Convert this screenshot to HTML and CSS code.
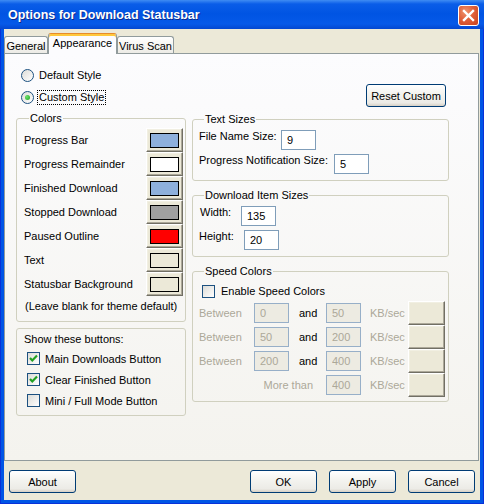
FILE: index.html
```html
<!DOCTYPE html>
<html lang="en">
	<head>
		<meta charset="UTF-8" />
		<title>Options for Download Statusbar</title>
		<link rel="stylesheet" href="styles.css">
	</head>
	<body>
		<div class="window">
			<!-- title bar -->
			<div class="titlebar">
				<span class="title">Options for Download Statusbar</span>
				<button class="close" aria-label="Close">
					<svg width="19" height="19" viewBox="0 0 19 19">
						<path d="M5 5 L14 14 M14 5 L5 14" stroke="#fff" stroke-width="2.4" stroke-linecap="square" fill="none" />
					</svg>
				</button>
			</div>

			<div class="client">
				<div class="tabs">
					<div class="tab tab-general">General</div>
					<div class="tab tab-appearance active">Appearance</div>
					<div class="tab tab-virus">Virus Scan</div>
				</div>

				<div class="panel">
					<div class="content">
						<div class="style-row">
							<div class="radios">
								<label class="radio-row"><span class="radio"></span><span class="radio-text">Default Style</span></label>
								<label class="radio-row"><span class="radio checked"></span><span class="radio-text focus">Custom Style</span></label>
							</div>
							<button class="btn reset">Reset Custom</button>
						</div>

						<div class="columns">
							<div class="col-left">
								<fieldset class="group colors">
									<legend>Colors</legend>
									<div class="color-row"><span>Progress Bar</span><button class="bevel"><span class="swatch sw-blue"></span></button></div>
									<div class="color-row"><span>Progress Remainder</span><button class="bevel"><span class="swatch sw-white"></span></button></div>
									<div class="color-row"><span>Finished Download</span><button class="bevel"><span class="swatch sw-blue"></span></button></div>
									<div class="color-row"><span>Stopped Download</span><button class="bevel"><span class="swatch sw-gray"></span></button></div>
									<div class="color-row"><span>Paused Outline</span><button class="bevel"><span class="swatch sw-red"></span></button></div>
									<div class="color-row"><span>Text</span><button class="bevel"><span class="swatch sw-theme"></span></button></div>
									<div class="color-row"><span>Statusbar Background</span><button class="bevel"><span class="swatch sw-theme"></span></button></div>
									<div class="note">(Leave blank for theme default)</div>
								</fieldset>

								<div class="show-box">
									<div class="show-title">Show these buttons:</div>
									<label class="check-row"><span class="check checked"><svg width="11" height="11" viewBox="0 0 11 11"><path d="M2 5 L4.3 7.5 L9 2.6" stroke="#21A121" stroke-width="2.2" fill="none" /></svg></span>Main Downloads Button</label>
									<label class="check-row"><span class="check checked"><svg width="11" height="11" viewBox="0 0 11 11"><path d="M2 5 L4.3 7.5 L9 2.6" stroke="#21A121" stroke-width="2.2" fill="none" /></svg></span>Clear Finished Button</label>
									<label class="check-row"><span class="check"></span>Mini / Full Mode Button</label>
								</div>
							</div>

							<div class="col-right">
								<fieldset class="group">
									<legend>Text Sizes</legend>
									<div class="field-row"><span class="lbl lbl-name">File Name Size:</span><input class="edit" value="9"></div>
									<div class="field-row"><span class="lbl lbl-notify">Progress Notification Size:</span><input class="edit" value="5"></div>
								</fieldset>

								<fieldset class="group">
									<legend>Download Item Sizes</legend>
									<div class="field-row"><span class="lbl lbl-width">Width:</span><input class="edit" value="135"></div>
									<div class="field-row"><span class="lbl lbl-height">Height:</span><input class="edit" value="20"></div>
								</fieldset>

								<fieldset class="group speed">
									<legend>Speed Colors</legend>
									<label class="check-row enable"><span class="check"></span>Enable Speed Colors</label>
									<div class="speed-grid">
										<span class="dim">Between</span><input class="edit" value="0" disabled><span class="and">and</span><input class="edit" value="50" disabled><span class="dim unit">KB/sec</span><button class="bevel"></button>
										<span class="dim">Between</span><input class="edit" value="50" disabled><span class="and">and</span><input class="edit" value="200" disabled><span class="dim unit">KB/sec</span><button class="bevel"></button>
										<span class="dim">Between</span><input class="edit" value="200" disabled><span class="and">and</span><input class="edit" value="400" disabled><span class="dim unit">KB/sec</span><button class="bevel"></button>
										<span class="dim more">More than</span><input class="edit" value="400" disabled><span class="dim unit">KB/sec</span><button class="bevel"></button>
									</div>
								</fieldset>
							</div>
						</div>
					</div>
				</div>

				<div class="footer">
					<button class="btn">About</button>
					<span class="spacer"></span>
					<button class="btn">OK</button>
					<button class="btn">Apply</button>
					<button class="btn">Cancel</button>
				</div>
			</div>
		</div>
	</body>
</html>
```

FILE: styles.css
```css
body {
	margin: 0;
	font-family: "Liberation Sans", Arial, sans-serif;
	font-size: 11px;
	color: #000;
}

.window {
	width: 484px;
	height: 504px;
	box-sizing: border-box;
	display: flex;
	flex-direction: column;
	background: #0055E5;
	box-shadow: inset 1px 0 #0831D9, inset -1px 0 #0831D9, inset 0 -1px #0831D9;
}

/* title bar */
.titlebar {
	height: 29px;
	flex: none;
	display: flex;
	align-items: flex-start;
	justify-content: space-between;
	padding: 0 5px 0 8px;
	background: linear-gradient(#3F8CF3 0, #0A5DE8 4px, #0054E3 14px, #0659E8 24px, #0347D0 29px);
}

.title {
	padding-top: 8px;
	color: #fff;
	font-weight: bold;
	font-size: 12.5px;
	line-height: 15px;
	text-shadow: 1px 1px #0C2A8C;
}

.close {
	margin-top: 5px;
	width: 21px;
	height: 21px;
	padding: 0;
	box-sizing: border-box;
	border: 1px solid #fff;
	border-radius: 3px;
	background: radial-gradient(circle at 35% 30%, #F0946E 0, #E0603A 45%, #C5411D 100%);
	display: flex;
	align-items: center;
	justify-content: center;
}

.client {
	flex: 1;
	margin: 0 4px 4px;
	background: #ECE9D8;
	display: flex;
	flex-direction: column;
}

/* tabs */
.tabs {
	display: flex;
	align-items: flex-start;
	padding-top: 4px;
	height: 20px;
}

.tab {
	box-sizing: border-box;
	height: 17px;
	margin-top: 3px;
	padding-top: 3px;
	line-height: 13px;
	text-align: center;
	border: 1px solid #919B9C;
	border-bottom: none;
	border-radius: 3px 3px 0 0;
	background: linear-gradient(#FFFFFF, #F4F3EE 60%, #ECEBE6);
}

.tab-general { width: 44px; }
.tab-virus { width: 57px; }

.tab.active {
	width: 69px;
	height: 21px;
	margin-top: 0;
	margin-bottom: -1px;
	padding-top: 3px;
	position: relative;
	z-index: 1;
	background: #FCFCFE;
	border-top-color: #E68B2C;
	box-shadow: inset 0 2px 0 #FFC83C;
}

.panel {
	height: 408px;
	box-sizing: border-box;
	margin-right: 1px;
	padding: 10px 0 0 11px;
	border: 1px solid #919B9C;
	background: linear-gradient(#FCFCFE, #F4F3EE);
}

.content {
	width: 433px;
}

/* style radios */
.style-row {
	display: flex;
	justify-content: space-between;
	align-items: flex-start;
}

.radio-row {
	display: flex;
	align-items: center;
	height: 22px;
	padding-left: 5px;
}

.radio {
	width: 13px;
	height: 13px;
	box-sizing: border-box;
	border: 1px solid #1C5180;
	border-radius: 50%;
	background: linear-gradient(135deg, #DCDCD7, #FFFFFF);
	display: flex;
	align-items: center;
	justify-content: center;
}

.radio.checked::after {
	content: "";
	width: 5px;
	height: 5px;
	border-radius: 50%;
	background: radial-gradient(circle at 35% 35%, #6BE26B, #21A121);
}

.radio-text {
	margin-left: 4px;
	padding: 0 1px;
	line-height: 13px;
}

.radio-text.focus {
	outline: 1px dotted #000;
}

.btn {
	box-sizing: border-box;
	height: 23px;
	padding: 0;
	font: inherit;
	color: #000;
	border: 1px solid #003C74;
	border-radius: 3px;
	background: linear-gradient(#FFFFFF, #F4F4F0 40%, #ECEBE6 85%, #D6D0C5);
}

.reset {
	width: 80px;
	margin: 20px 3px 0 0;
}

/* two columns */
.columns {
	display: grid;
	grid-template-columns: 170px 257px;
	column-gap: 6px;
	margin-top: 4px;
	align-items: start;
}

.group {
	margin: 0;
	padding: 4px 0 6px 6px;
	border: 1px solid #D0D0BF;
	border-radius: 3px;
	min-width: 0;
}

.group legend {
	padding: 0 1px;
	margin-left: 5px;
	line-height: 13px;
}

.colors {
	padding: 3px 2px 8px 7px;
}

.color-row {
	display: flex;
	align-items: center;
	justify-content: space-between;
	height: 24px;
}

.bevel {
	width: 37px;
	height: 24px;
	box-sizing: border-box;
	padding: 0;
	display: flex;
	align-items: center;
	justify-content: center;
	background: #ECE9D8;
	border: 1px solid;
	border-color: #FFFFFF #716F64 #716F64 #FFFFFF;
	box-shadow: inset -1px -1px #ACA899, inset 1px 1px #F1EFE2;
}

.swatch {
	width: 29px;
	height: 15px;
	box-sizing: border-box;
	border: 1px solid #000;
}

.sw-blue { background: #8EB0DC; }
.sw-white { background: #FFFFFF; }
.sw-gray { background: #A0A0A0; }
.sw-red { background: #FF0000; }
.sw-theme { background: #ECE9D8; }

.note {
	margin-top: 4px;
	padding-left: 1px;
	line-height: 13px;
}

.show-box {
	margin-top: 6px;
	padding: 4px 0 4px 7px;
	border: 1px solid #D0D0BF;
	border-radius: 3px;
}

.show-title {
	line-height: 13px;
	margin-bottom: 2px;
}

.check-row {
	display: flex;
	align-items: center;
	height: 21px;
	padding-left: 3px;
}

.check {
	width: 13px;
	height: 13px;
	flex: none;
	box-sizing: border-box;
	margin-right: 5px;
	border: 1px solid #1C5180;
	background: linear-gradient(135deg, #DCDCD7, #FFFFFF);
	display: flex;
	align-items: center;
	justify-content: center;
}

/* right column */
.col-right {
	margin-top: 1px;
}

.col-right .group + .group {
	margin-top: 8px;
}

.field-row {
	display: flex;
	align-items: flex-start;
}

.field-row + .field-row {
	margin-top: 4px;
}

.lbl {
	line-height: 13px;
}

.lbl-name { width: 82px; }
.lbl-notify { width: 135px; }
.lbl-width { width: 41px; padding-left: 1px; }
.lbl-height { width: 45px; }

.edit {
	width: 35px;
	height: 20px;
	box-sizing: border-box;
	margin: 0;
	padding: 0 5px;
	font: inherit;
	color: #000;
	border: 1px solid #7F9DB9;
	background: #fff;
	outline: none;
}

.edit:disabled {
	color: #ACA899;
	background: #EDEBE2;
	border-color: #97AFC8;
}

.speed {
	padding-bottom: 4px;
}

.check-row.enable {
	height: 18px;
	padding-left: 3px;
}

.check-row.enable .check {
	margin-right: 6px;
}

.speed-grid {
	display: grid;
	grid-template-columns: 55px 35px 37px 35px 47px 37px;
	grid-auto-rows: 24px;
	align-items: center;
	margin-top: 1px;
}

.dim {
	color: #ACA899;
}

.and {
	padding-left: 10px;
}

.unit {
	padding-left: 9px;
}

.more {
	grid-column: 1 / 4;
	text-align: right;
	padding-right: 13px;
}

/* bottom buttons */
.footer {
	display: flex;
	gap: 12px;
	padding: 9px 5px 0;
}

.footer .btn {
	width: 67px;
}

.spacer {
	flex: 1;
}
```
